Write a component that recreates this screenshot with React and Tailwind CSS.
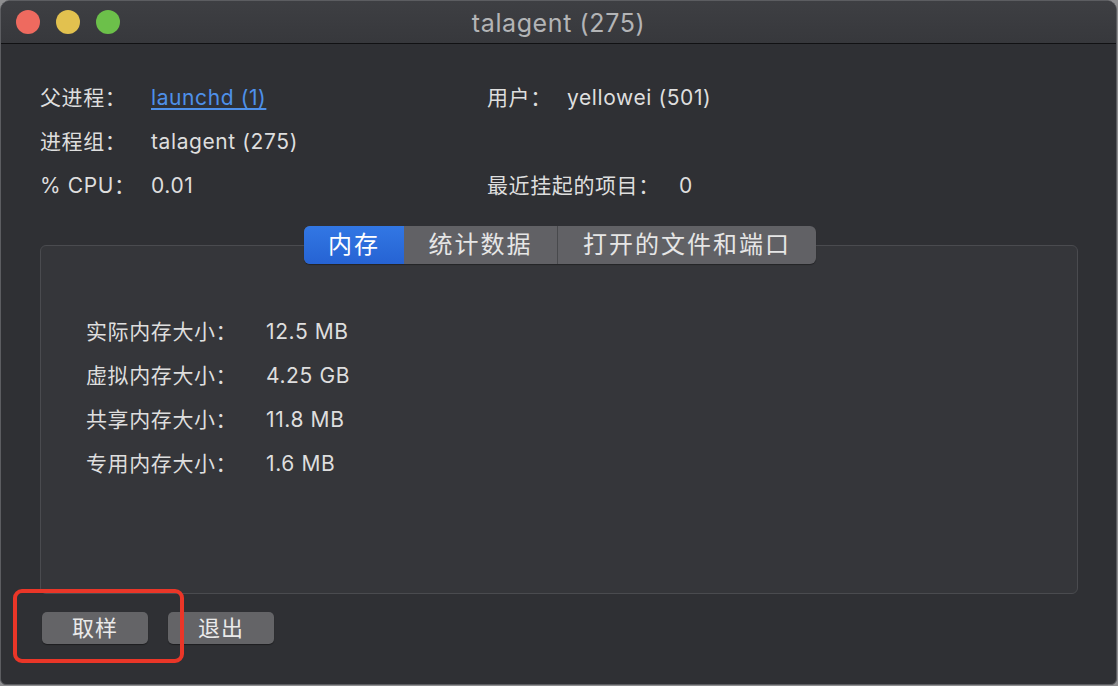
import React from "react";

const infoLeft = [
  { label: "父进程：", value: "launchd (1)", link: true },
  { label: "进程组：", value: "talagent (275)" },
  { label: "% CPU：", value: "0.01" },
];

const infoRight = [
  { label: "用户：", value: "yellowei (501)", gap: "w-[80px]" },
  { label: "", value: "" },
  { label: "最近挂起的项目：", value: "0", gap: "w-[192px]" },
];

const memory = [
  { label: "实际内存大小：", value: "12.5 MB" },
  { label: "虚拟内存大小：", value: "4.25 GB" },
  { label: "共享内存大小：", value: "11.8 MB" },
  { label: "专用内存大小：", value: "1.6 MB" },
];

const tabs = [
  { name: "内存", width: "w-[100px]", active: true },
  { name: "统计数据", width: "w-[153px]" },
  { name: "打开的文件和端口", width: "w-[259px]" },
];

export default function App() {
  return (
    <div
      className="w-[1118px] h-[686px] bg-[#8e8e90] overflow-hidden"
      style={{ fontFamily: '"Inter", "Noto Sans CJK SC", sans-serif' }}
    >
      <div className="relative w-[1117px] h-[685px] flex flex-col rounded-t-[10px] rounded-b-[6px] border border-[#5c5d61] bg-[#2f3034] overflow-hidden">
        {/* title bar */}
        <div className="relative h-[43px] flex items-center shrink-0 bg-gradient-to-b from-[#3e3f43] to-[#37383c] border-b border-[#111113]">
          <div className="flex items-center gap-[16px] pl-[15px]">
            <span className="w-[24px] h-[24px] rounded-full bg-[#ee6a5f]" />
            <span className="w-[24px] h-[24px] rounded-full bg-[#e2c14f]" />
            <span className="w-[24px] h-[24px] rounded-full bg-[#6cc04a]" />
          </div>
          <div className="absolute inset-0 pt-[3px] flex items-center justify-center text-[25px] text-[#b3b4b6] tracking-[0.6px]">
            talagent (275)
          </div>
        </div>

        {/* info */}
        <div className="flex pl-[39px] pt-[32px] text-[21px] tracking-[0.6px] text-[#dedede]">
          <div className="w-[447px] flex flex-col">
            {infoLeft.map((r) => (
              <div key={r.label} className="h-[44px] flex items-center">
                <span className="w-[111px] shrink-0">{r.label}</span>
                {r.link ? (
                  <span className="text-[#4e90ea] underline underline-offset-[3px]">{r.value}</span>
                ) : (
                  <span>{r.value}</span>
                )}
              </div>
            ))}
          </div>
          <div className="flex flex-col">
            {infoRight.map((r, i) => (
              <div key={i} className="h-[44px] flex items-center">
                <span className={`${r.gap} shrink-0`}>{r.label}</span>
                <span>{r.value}</span>
              </div>
            ))}
          </div>
        </div>

        {/* tab view */}
        <div className="mt-[18px] pl-[39px] w-[1077px] flex flex-col">
          <div className="relative z-10 flex justify-center pl-[2px]">
            <div className="flex h-[38px] rounded-[6px] overflow-hidden bg-[#616165] shadow-[0_1px_1px_rgba(0,0,0,0.35)] text-[24px] tracking-[2px] text-[#e6e6e6]">
              {tabs.map((t, i) => (
                <div
                  key={t.name}
                  className={
                    t.active
                      ? `${t.width} flex items-center justify-center bg-gradient-to-b from-[#3277e4] to-[#2663d3] text-white`
                      : i === 2
                      ? `${t.width} flex items-center justify-center border-l border-[#48494c]`
                      : `${t.width} flex items-center justify-center`
                  }
                >
                  {t.name}
                </div>
              ))}
            </div>
          </div>
          <div className="-mt-[19px] h-[349px] rounded-[6px] border border-[#4a4b4f] bg-[#35363a] pt-[64px] pl-[45px] text-[21px] tracking-[0.6px] text-[#dedede]">
            {memory.map((m) => (
              <div key={m.label} className="h-[44px] flex items-center">
                <span className="w-[180px] shrink-0">{m.label}</span>
                <span>{m.value}</span>
              </div>
            ))}
          </div>
        </div>

        {/* buttons */}
        <div className="flex gap-[20px] pl-[41px] mt-[18px] text-[22px] tracking-[1px] text-[#eaeaea]">
          <button className="w-[106px] h-[32px] rounded-[5px] bg-[#646467] shadow-[0_1px_1px_rgba(0,0,0,0.4)] flex items-center justify-center">
            取样
          </button>
          <button className="w-[106px] h-[32px] rounded-[5px] bg-[#646467] shadow-[0_1px_1px_rgba(0,0,0,0.4)] flex items-center justify-center">
            退出
          </button>
        </div>

        {/* annotation highlight */}
        <div className="absolute left-[12px] top-[588px] w-[171px] h-[74px] rounded-[9px] border-[4px] border-[#ea3628]" />
      </div>
    </div>
  );
}
